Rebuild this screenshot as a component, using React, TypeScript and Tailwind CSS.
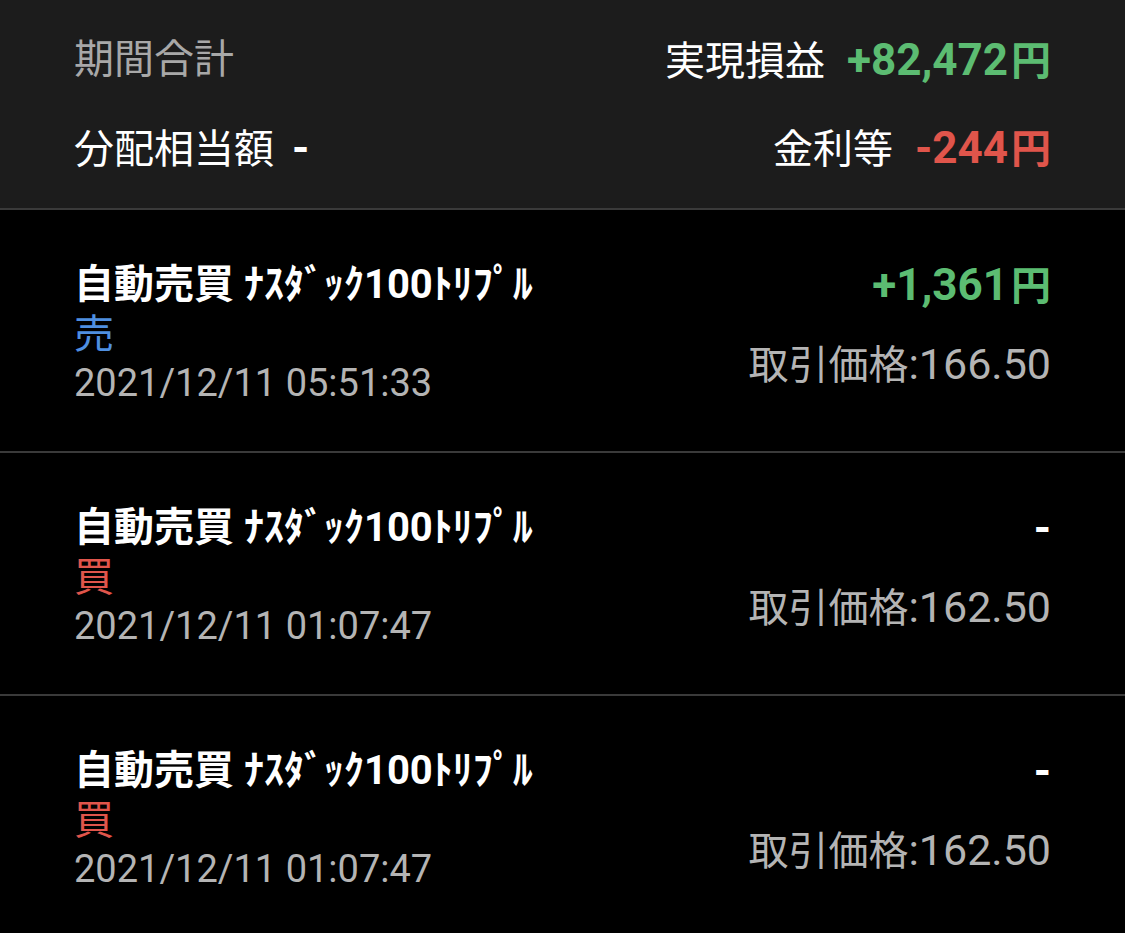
const font = "font-['Roboto','Noto_Sans_CJK_JP',sans-serif]";

const trades = [
  { side: '売', sideColor: 'text-[#4f8fe0]', date: '2021/12/11 05:51:33', pnl: '+1,361', price: '166.50' },
  { side: '買', sideColor: 'text-[#e0554b]', date: '2021/12/11 01:07:47', pnl: '-', price: '162.50' },
  { side: '買', sideColor: 'text-[#e0554b]', date: '2021/12/11 01:07:47', pnl: '-', price: '162.50' },
];

// 金額表示 (数字 + 円)
const Yen = ({ value, color }: { value: string; color: string }) => (
  <span className={`font-bold ${color}`}>
    <span className="text-[44px]">{value}</span>
    {value !== '-' && <span className="text-[40px] ml-[3px]">円</span>}
  </span>
);

const App = () => {
  return (
    <div className={`w-[1125px] h-[933px] bg-black overflow-hidden text-[40px] ${font}`}>
      {/* 期間合計 */}
      <section className="bg-[#1c1c1c] px-[74px] py-[16px]">
        <div className="flex items-center justify-between h-[88px]">
          <span className="text-[#a8a8a8]">期間合計</span>
          <span className="text-white">
            実現損益
            <span className="ml-[22px]">
              <Yen value="+82,472" color="text-[#5cbc72]" />
            </span>
          </span>
        </div>
        <div className="flex items-center justify-between h-[88px]">
          <span className="text-white">
            分配相当額
            <span className="ml-[18px] font-bold text-[44px]">-</span>
          </span>
          <span className="text-white">
            金利等
            <span className="ml-[22px]">
              <Yen value="-244" color="text-[#e0554b]" />
            </span>
          </span>
        </div>
      </section>

      {trades.map((t, i) => (
        <div key={i} className="border-t-2 border-[#3a3a3a] h-[243px] px-[74px] pt-[50px] flex justify-between">
          <div className="leading-[50px]">
            <div className="font-bold text-white">自動売買 ﾅｽﾀﾞｯｸ100ﾄﾘﾌﾟﾙ</div>
            <div className={t.sideColor}>{t.side}</div>
            <div className="text-[#b4b4b4] text-[38px] -mt-[2px]">{t.date}</div>
          </div>
          <div className="text-right leading-[50px]">
            <div>
              <Yen value={t.pnl} color={t.pnl === '-' ? 'text-white' : 'text-[#5cbc72]'} />
            </div>
            <div className="text-[#b4b4b4] mt-[27px]">
              取引価格<span className="text-[43px]">:{t.price}</span>
            </div>
          </div>
        </div>
      ))}
    </div>
  );
};

export default App;
